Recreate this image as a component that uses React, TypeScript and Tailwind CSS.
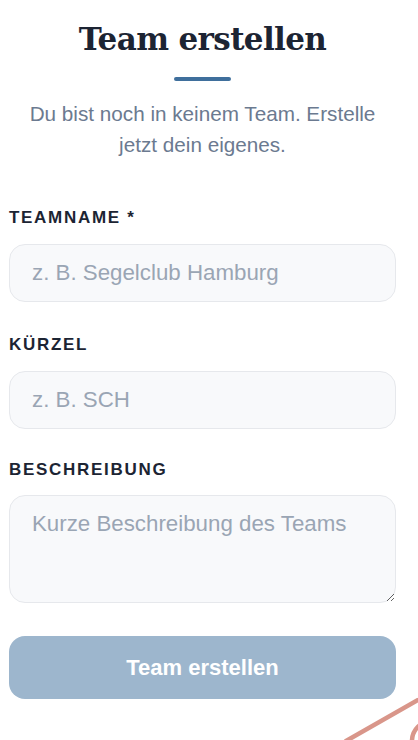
import React from 'react'

const sans = { fontFamily: '"Liberation Sans", Arial, sans-serif' }

const labelCls =
  'block text-[17px] font-bold leading-[20px] tracking-[0.1em] text-[#1c2433]'
const fieldCls =
  'w-full rounded-[16px] border border-[#e6e8ec] bg-[#f8f9fb] px-[22px] text-[22.3px] text-[#1c2433] placeholder-[#9aa5b4] outline-none'

const App = () => {
  return (
    <div className="relative min-h-[740px] w-[418px] overflow-hidden bg-white" style={sans}>
      <div className="ml-[9px] w-[387px] pt-[20px]">
        {/* Header */}
        <h1
          className="text-center text-[31px] font-bold leading-[38px] tracking-[-0.02em] text-[#1c2433]"
          style={{ fontFamily: 'Georgia, "DejaVu Serif", "Liberation Serif", serif' }}
        >
          Team erstellen
        </h1>
        <div className="mx-auto mt-[19px] h-[4px] w-[57px] rounded-full bg-[#3f6f9c]" />
        <p className="mx-auto mt-[17px] w-[370px] text-center text-[20.7px] leading-[31px] text-[#6b7a90]">
          Du bist noch in keinem Team. Erstelle jetzt dein eigenes.
        </p>

        {/* Form */}
        <form className="mt-[48px] flex flex-col" onSubmit={(e) => e.preventDefault()}>
          <label className={`${labelCls} mb-[16px]`}>TEAMNAME *</label>
          <input type="text" placeholder="z. B. Segelclub Hamburg" className={`${fieldCls} h-[58px]`} />

          <label className={`${labelCls} mb-[16px] mt-[33px]`}>KÜRZEL</label>
          <input type="text" placeholder="z. B. SCH" className={`${fieldCls} h-[58px]`} />

          <label className={`${labelCls} mb-[15px] mt-[31px]`}>BESCHREIBUNG</label>
          <textarea
            placeholder="Kurze Beschreibung des Teams"
            className={`${fieldCls} block h-[108px] pt-[14px] leading-[28px]`}
          />

          <button
            type="submit"
            className="mt-[33px] h-[63px] w-full rounded-[16px] bg-[#9db6cd] text-[22px] font-bold text-white"
          >
            Team erstellen
          </button>
        </form>
      </div>

      {/* decorative corner sketch */}
      <svg className="absolute bottom-0 right-0" width="80" height="45" viewBox="0 0 80 45" fill="none">
        <path d="M8 46 L80 5" stroke="#d9968a" strokeWidth="4.5" strokeLinecap="round" />
        <circle cx="94" cy="46" r="20" stroke="#d9968a" strokeWidth="4.5" />
      </svg>
    </div>
  )
}

export default App
